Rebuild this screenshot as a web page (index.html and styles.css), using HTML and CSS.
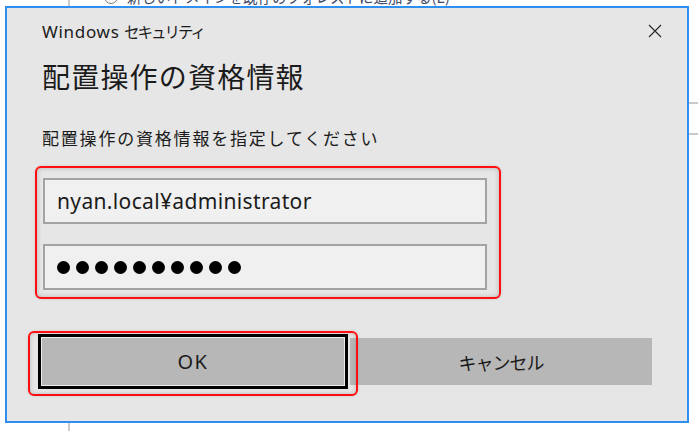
FILE: index.html
```html
<!DOCTYPE html>
<html lang="ja">
<head>
<meta charset="utf-8">
<title>Windows セキュリティ</title>
<link rel="stylesheet" href="styles.css">
</head>
<body>
<div class="desktop">
  <div class="bg-window">
    <div class="radio-row">
      <span class="radio"></span>
      <span class="radio-label">新しいドメインを既存のフォレストに追加する(E)</span>
    </div>
    <div class="rule rule-a"></div>
    <div class="rule rule-b"></div>
  </div>

  <div class="dialog">
    <div class="titlebar">
      <span class="app-title"><span class="latin">Windows</span> <span class="kana">セキュリティ</span></span>
      <svg class="close" width="14" height="14" viewBox="0 0 14 14" aria-label="閉じる">
        <path d="M1 1 L13 13 M13 1 L1 13" stroke="#2b2b2b" stroke-width="1.2" fill="none"/>
      </svg>
    </div>
    <div class="heading">配置操作の資格情報</div>
    <div class="subtitle">配置操作の資格情報を指定してください</div>

    <div class="creds">
      <div class="field">nyan.local¥administrator</div>
      <div class="field password">
        <span class="dot"></span><span class="dot"></span><span class="dot"></span><span class="dot"></span><span class="dot"></span><span class="dot"></span><span class="dot"></span><span class="dot"></span><span class="dot"></span><span class="dot"></span>
      </div>
    </div>

    <div class="buttons">
      <div class="btn btn-ok">OK<span class="mark"></span></div>
      <div class="btn btn-cancel">キャンセル</div>
    </div>
  </div>
</div>
</body>
</html>
```

FILE: styles.css
```css
html, body {
  margin: 0;
  padding: 0;
  background: #ffffff;
}
body {
  font-family: "Noto Sans", "Noto Sans CJK JP", sans-serif;
  color: #1b1b1b;
}
.desktop {
  position: relative;
  width: 698px;
  height: 431px;
  overflow: hidden;
  background: #ffffff;
}

/* window behind the dialog */
.bg-window {
  position: absolute;
  left: 68px;
  top: -16px;
  width: 640px;
  height: 460px;
  border-left: 2px solid #cbcbcb;
  box-sizing: border-box;
}
.radio-row {
  display: flex;
  align-items: center;
  gap: 9px;
  margin-left: 34px;
  height: 20px;
  margin-top: 3px;
}
.radio {
  width: 14px;
  height: 14px;
  border: 1px solid #7a7a7a;
  border-radius: 50%;
  box-sizing: border-box;
}
.radio-label {
  font-family: "Noto Sans CJK JP", sans-serif;
  font-size: 14.5px;
  line-height: 20px;
  color: #3f4a66;
  white-space: nowrap;
}
.rule {
  height: 2px;
  background: #c9c9c9;
}
.rule-a { margin-top: 95px; }
.rule-b { margin-top: 29px; }

/* dialog window */
.dialog {
  position: absolute;
  left: 5px;
  top: 6px;
  width: 684px;
  height: 417px;
  box-sizing: border-box;
  border: 2px solid #2f8ff0;
  background: #e6e6e6;
  padding: 8px 25px 0 35px;
  display: flex;
  flex-direction: column;
}
.titlebar {
  height: 30px;
  display: flex;
  align-items: center;
  justify-content: space-between;
}
.app-title {
  font-size: 17px;
  color: #1b1b1b;
  white-space: nowrap;
}
.latin {
  letter-spacing: 0.7px;
}
.kana {
  font-family: "Noto Sans CJK JP", sans-serif;
  font-size: 15.5px;
  letter-spacing: -2px;
}
.close {
  display: block;
}
.heading {
  margin-top: 12px;
  font-family: "Noto Sans CJK JP", sans-serif;
  font-size: 28px;
  line-height: 36px;
  letter-spacing: 1.2px;
  color: #1b1b1b;
}
.subtitle {
  margin-top: 32px;
  font-family: "Noto Sans CJK JP", sans-serif;
  font-size: 17px;
  line-height: 24px;
  letter-spacing: 1.8px;
  color: #1b1b1b;
}

.creds {
  margin-top: 16px;
  margin-left: -7px;
  width: 466px;
  box-sizing: border-box;
  border: 2px solid #ff0f0f;
  border-radius: 6px;
  padding: 10px 12px 7px 6px;
  display: flex;
  flex-direction: column;
  gap: 20px;
  box-shadow: inset 0 0 5px rgba(0,0,0,0.22), 0 0 3px rgba(0,0,0,0.12);
}
.field {
  height: 46px;
  box-sizing: border-box;
  border: 2px solid #a3a3a3;
  background: #f0f0f0;
  padding: 0 12px;
  display: flex;
  align-items: center;
  font-size: 21px;
  letter-spacing: 0.35px;
  color: #1b1b1b;
}
.password {
  gap: 6px;
  padding-left: 12px;
}
.dot {
  width: 13px;
  height: 13px;
  border-radius: 50%;
  background: #000;
}

.buttons {
  margin-top: 35px;
  margin-left: -4px;
  display: flex;
  align-items: center;
  gap: 2px;
}
.btn {
  display: flex;
  align-items: center;
  justify-content: center;
  box-sizing: border-box;
  background: #b7b7b7;
  color: #1b1b1b;
}
.btn-ok {
  position: relative;
  width: 310px;
  height: 55px;
  border: 3px solid #000;
  box-shadow: inset 0 0 0 1px #ececec;
  font-family: "Noto Sans", sans-serif;
  font-size: 20px;
  letter-spacing: 1.5px;
}
.btn-cancel {
  width: 302px;
  height: 47px;
  font-family: "Noto Sans CJK JP", sans-serif;
  font-size: 18px;
  letter-spacing: -1px;
}
.mark {
  position: absolute;
  left: -13px;
  top: -6px;
  right: -13px;
  bottom: -10px;
  border: 2px solid #ff0f0f;
  border-radius: 6px;
  box-shadow: inset 0 0 4px rgba(0,0,0,0.18), 0 0 3px rgba(0,0,0,0.12);
}
```
